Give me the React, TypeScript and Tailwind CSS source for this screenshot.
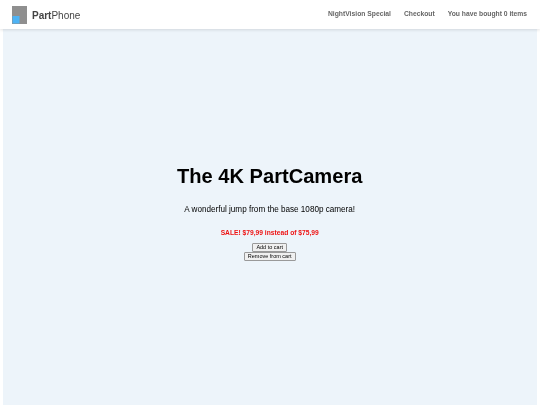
import React from 'react';

function Logo() {
  return (
    <svg width="15" height="18" viewBox="0 0 15 18" className="shrink-0">
      <rect x="0" y="0" width="15" height="18" fill="#8f8f8f" />
      <rect x="0.5" y="10" width="7" height="7.5" fill="#4db3f5" />
    </svg>
  );
}

export default function App() {
  const links = ['NightVision Special', 'Checkout', 'You have bought 0 items'];

  return (
    <div className="min-h-[405px] h-[405px] flex flex-col bg-white font-['Liberation_Sans',Arial,sans-serif] overflow-hidden">
      <header className="h-[29px] shrink-0 flex items-center justify-between pl-[12px] pr-[13px] bg-white shadow-[0_1px_3px_rgba(0,0,0,0.12)] relative">
        <div className="flex items-center gap-[5px] will-change-transform">
          <Logo />
          <span className="text-[10px] text-[#444]">
            <span className="font-bold">Part</span>Phone
          </span>
        </div>
        <nav className="flex items-center gap-[13px] text-[6.75px] font-bold text-[#666] will-change-transform">
          {links.map((l) => (
            <a key={l}>{l}</a>
          ))}
        </nav>
      </header>
      <main className="flex-1 mx-[3px] pb-[10px] bg-[#edf4fa] text-black flex flex-col items-center justify-center">
        <div className="flex flex-col items-center will-change-transform">
          <h1 className="text-[20.1px] leading-[24px] font-bold">The 4K PartCamera</h1>
          <p className="text-[8.15px] leading-[11px] mt-[16px]">A wonderful jump from the base 1080p camera!</p>
          <p className="text-[6.7px] leading-[9px] font-bold text-[#ee1111] mt-[13px]">SALE! $79,99 instead of $75,99</p>
          <button className="mt-[6px] h-[9px] px-[3px] flex items-center justify-center text-[5.5px] leading-none border border-[#999] rounded-[1px] bg-[#f0f0f0]">Add to cart</button>
          <button className="h-[9px] px-[3px] flex items-center justify-center text-[5.5px] leading-none border border-[#999] rounded-[1px] bg-[#f0f0f0]">Remove from cart</button>
        </div>
      </main>
    </div>
  );
}
